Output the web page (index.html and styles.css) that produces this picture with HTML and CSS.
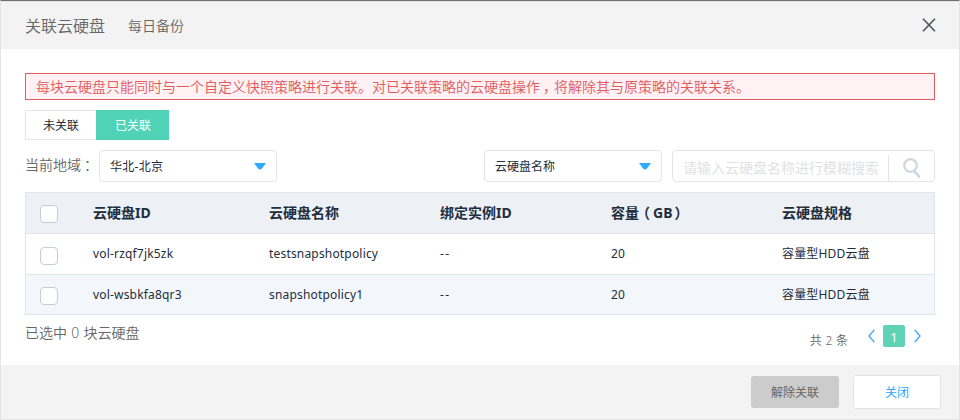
FILE: index.html
```html
<!DOCTYPE html>
<html lang="zh-CN">
<head>
<meta charset="utf-8">
<title>关联云硬盘</title>
<link rel="stylesheet" href="styles.css">
</head>
<body>
<div class="dialog">
  <header class="head">
    <h1 class="title">关联云硬盘</h1>
    <span class="subtitle">每日备份</span>
    <svg class="close" width="14" height="14" viewBox="0 0 14 14"><path d="M1 .7L13 13.3M13 .7L1 13.3" fill="none" stroke="#4d5460" stroke-width="1.6"/></svg>
  </header>
  <main class="body">
    <div class="alert">每块云硬盘只能同时与一个自定义快照策略进行关联。对已关联策略的云硬盘操作<span class="mid">，</span>将解除其与原策略的关联关系。</div>
    <div class="tabs"><div class="tab">未关联</div><div class="tab active">已关联</div></div>
    <div class="filters">
      <span class="label">当前地域<span class="mid">：</span></span>
      <div class="select"><span class="region">华北-北京</span><svg width="12" height="7" viewBox="0 0 12 7"><path d="M0 0H12L8 5.6Q6 7.4 4 5.6Z" fill="#2eaaff"/></svg></div>
      <div class="select by"><span>云硬盘名称</span><svg width="12" height="7" viewBox="0 0 12 7"><path d="M0 0H12L8 5.6Q6 7.4 4 5.6Z" fill="#2eaaff"/></svg></div>
      <div class="search"><span class="hint">请输入云硬盘名称进行模糊搜索</span><div class="go"><svg width="18" height="20" viewBox="0 0 18 20"><circle cx="7.5" cy="7.5" r="6.3" fill="none" stroke="#ccd6e0" stroke-width="2.2"/><path d="M11.3 13L16 18.6" stroke="#ccd6e0" stroke-width="2.6" stroke-linecap="round"/></svg></div></div>
    </div>
    <div class="table">
      <div class="row th"><i class="box"></i><span>云硬盘ID</span><span>云硬盘名称</span><span>绑定实例ID</span><span>容<span class="tight">量</span><span class="open">（</span>GB<span class="shut">）</span></span><span>云硬盘规格</span></div>
      <div class="row"><i class="box"></i><span>vol-rzqf7jk5zk</span><span>testsnapshotpolicy</span><span class="none">--</span><span>20</span><span class="spec">容量型HDD云盘</span></div>
      <div class="row alt"><i class="box"></i><span>vol-wsbkfa8qr3</span><span>snapshotpolicy1</span><span class="none">--</span><span>20</span><span class="spec">容量型HDD云盘</span></div>
    </div>
    <div class="summary">
      <span class="picked">已选中 0 块云硬盘</span>
      <span class="total">共 2 条</span>
      <svg class="arrow" width="7" height="14" viewBox="0 0 7 14"><path d="M6.3 .7L1 7L6.3 13.3" fill="none" stroke="#48abf5" stroke-width="1.4"/></svg>
      <span class="page">1</span>
      <svg class="arrow" width="7" height="14" viewBox="0 0 7 14"><path d="M.7 .7L6 7L.7 13.3" fill="none" stroke="#48abf5" stroke-width="1.4"/></svg>
    </div>
  </main>
  <footer class="foot"><div class="btn off">解除关联</div><div class="btn">关闭</div></footer>
</div>
</body>
</html>
```
FILE: styles.css
```css
* { box-sizing: border-box; }
body {
  margin: 0;
  background: #fff;
  color: #666;
  font: 14px/20px "Noto Sans", "Noto Sans CJK SC", sans-serif;
}
.dialog {
  display: flex;
  flex-direction: column;
  width: 960px;
  height: 420px;
  overflow: hidden;
  border: 1px solid #e5e5e5;
  border-top-color: #717171;
  white-space: nowrap;
}
.head {
  display: flex;
  align-items: center;
  height: 48px;
  flex: none;
  padding: 0 23px 0 24px;
  border-top: 1px solid #e5e5e5;
  background: #f3f3f3;
}
.title { margin: 0 23px 0 0; font-size: 16px; font-weight: 350; }
.subtitle { font-size: 14px; font-weight: 350; }
.close { margin-left: auto; margin-top: -1px; }
.body { flex: 1; padding: 24px 24px 0; }
.alert {
  height: 27px;
  padding-left: 10px;
  border: 1px solid #e45b61;
  background: #fff1f4;
  color: #e05a5f;
  font-weight: 350;
  line-height: 26px;
}
.mid { margin-left: 3px; letter-spacing: -3px; }
.tabs { display: flex; margin-top: 10px; font-size: 12px; }
.tab {
  width: 71px;
  height: 30px;
  border: 1px solid #e5e5e5;
  border-right: 0;
  color: #222d3c;
  line-height: 29px;
  text-align: center;
}
.tab.active { width: 73px; border-color: #50d2b6; background: #50d2b6; color: #fff; }
.filters { display: flex; margin-top: 10px; height: 32px; }
.label { width: 74px; line-height: 30px; font-weight: 350; }
.select {
  display: flex;
  align-items: center;
  justify-content: space-between;
  width: 178px;
  padding: 0 10px;
  border: 1px solid #e5e5e5;
  border-radius: 4px;
  color: #222d3c;
  font-size: 12px;
}
.select span { padding-top: 1px; }
.region { letter-spacing: .3px; }
.by { margin-left: auto; }
.search {
  display: flex;
  width: 263px;
  margin-left: 10px;
  padding-left: 10px;
  border: 1px solid #e5e5e5;
  border-radius: 4px;
}
.hint { flex: 1; color: #dfe1e3; line-height: 34px; }
.go { width: 46px; margin-top: 4px; padding: 3px 0 0 14px; border-left: 1px solid #e5e5e5; }
.go svg { display: block; }
.table { margin-top: 10px; border: 1px solid #dde4eb; }
.row {
  display: grid;
  grid-template-columns: 53px 176px 171px 171px 171px 1fr;
  align-items: center;
  height: 41px;
  padding-left: 14px;
  border-bottom: 1px solid #dde4eb;
  color: #222d3c;
  font-size: 12px;
  letter-spacing: .18px;
}
.row:last-child { height: 39px; border: 0; }
.row.alt { background: #f3f6fb; }
.row.th { background: #edf1f6; font-size: 14px; font-weight: 700; letter-spacing: 0; }
.row .none { letter-spacing: 1.5px; }
.tight { letter-spacing: -3px; }
.open { letter-spacing: 3px; }
.shut { margin-left: 2px; }
.box {
  width: 18px;
  height: 18px;
  margin-top: 3px;
  border: 1px solid #c1cddb;
  border-radius: 4px;
  background: #fff;
}
.th .box { margin-top: 2px; }
.summary { display: flex; align-items: center; height: 42px; padding-right: 14px; }
.picked { margin-right: auto; margin-top: -6px; font-weight: 350; word-spacing: .6px; }
.total { margin: 9px 20px 0 0; font-size: 12px; font-weight: 350; word-spacing: .6px; }
.page {
  width: 22px;
  height: 22px;
  margin: 0 9px 0 8px;
  border-radius: 2px;
  background: #60d2b5;
  color: #fff;
  font-size: 13px;
  line-height: 24px;
  text-align: center;
}
.foot {
  display: flex;
  justify-content: flex-end;
  gap: 14px;
  flex: none;
  height: 54px;
  padding: 10px 18px 0 0;
  background: #f3f3f3;
  font-size: 12px;
}
.btn {
  width: 88px;
  height: 34px;
  border: 1px solid #dde4eb;
  border-radius: 3px;
  background: #fff;
  color: #2ca6fb;
  line-height: 33px;
  text-align: center;
}
.btn.off { height: 32px; margin-top: 1px; border: 0; background: #ccc; color: #666; }
```
